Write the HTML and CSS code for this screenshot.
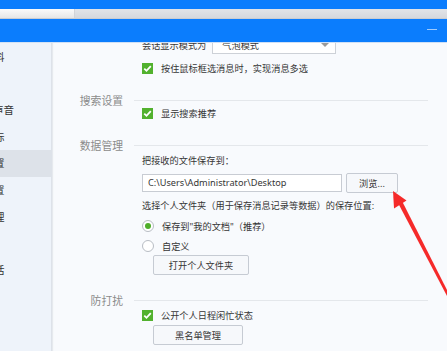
FILE: index.html
```html
<!DOCTYPE html>
<html lang="zh-CN">
<head>
  <meta charset="UTF-8">
  <title>系统设置</title>
  <link rel="stylesheet" href="styles.css">
</head>
<body>

  <!-- window chrome -->
  <div class="top-strip"></div>
  <div class="tab-strip">
    <div class="tab"></div>
    <div class="tab-rest"></div>
  </div>
  <div class="title-bar">
    <span class="min-btn"></span>
  </div>

  <div class="main">
    <!-- left menu, mostly scrolled out of view -->
    <div class="sidebar">
      <div class="side-item">资料</div>
      <div class="side-item"></div>
      <div class="side-item side-wide">声音</div>
      <div class="side-item">图标</div>
      <div class="side-item active">设置</div>
      <div class="side-item">设置</div>
      <div class="side-item">管理</div>
      <div class="side-item"></div>
      <div class="side-item">会话</div>
    </div>

    <div class="content">
      <!-- top rows, partly under the title bar -->
      <div class="section top-section">
        <div></div>
        <div class="section-body plain">
          <div class="row select-row">
            <span>会话显示模式为</span>
            <div class="select">
              <span>气泡模式</span>
              <span class="caret"></span>
            </div>
          </div>
          <div class="row check-row gap-7">
            <span class="checkbox"><svg viewBox="0 0 11 11"><path d="M2.3 5.6 L4.5 7.8 L8.8 3.2" fill="none" stroke="#fff" stroke-width="1.8"/></svg></span>
            <span>按住鼠标框选消息时，实现消息多选</span>
          </div>
        </div>
      </div>

      <div class="section">
        <div class="section-title">搜索设置</div>
        <div class="section-body">
          <div class="row check-row gap-5">
            <span class="checkbox"><svg viewBox="0 0 11 11"><path d="M2.3 5.6 L4.5 7.8 L8.8 3.2" fill="none" stroke="#fff" stroke-width="1.8"/></svg></span>
            <span>显示搜索推荐</span>
          </div>
        </div>
      </div>

      <div class="section">
        <div class="section-title">数据管理</div>
        <div class="section-body">
          <div class="row gap-7">把接收的文件保存到：</div>
          <div class="row path-row">
            <div class="path-input">C:\Users\Administrator\Desktop</div>
            <button class="btn browse-btn">浏览...</button>
          </div>
          <div class="row gap-5">选择个人文件夹（用于保存消息记录等数据）的保存位置:</div>
          <div class="row check-row gap-7">
            <span class="radio checked"></span>
            <span>保存到"我的文档"（推荐）</span>
          </div>
          <div class="row check-row gap-6">
            <span class="radio"></span>
            <span>自定义</span>
          </div>
          <button class="btn indent-btn open-btn">打开个人文件夹</button>
        </div>
      </div>

      <div class="section last">
        <div class="section-title">防打扰</div>
        <div class="section-body">
          <div class="row check-row gap-7">
            <span class="checkbox"><svg viewBox="0 0 11 11"><path d="M2.3 5.6 L4.5 7.8 L8.8 3.2" fill="none" stroke="#fff" stroke-width="1.8"/></svg></span>
            <span>公开个人日程闲忙状态</span>
          </div>
          <button class="btn indent-btn black-btn">黑名单管理</button>
        </div>
      </div>
    </div>
  </div>

  <!-- red annotation arrow drawn over the page -->
  <svg class="arrow" width="447" height="351" viewBox="0 0 447 351">
    <polygon points="393,191 406.5,200.5 394,208.5" fill="#f52a2a"/>
    <polygon points="397.5,202 401.5,200 448,292 447,296" fill="#f52a2a"/>
  </svg>

</body>
</html>
```

FILE: styles.css
```css
/* whole window */
body {
  margin: 0;
  width: 447px;
  height: 351px;
  overflow: hidden;
  font-family: "Noto Sans", "Noto Sans CJK SC", sans-serif;
  font-size: 9.2px;
  color: #363636;
  background: #f8fafd;
}

.top-strip {
  height: 9px;
  background: #0b7dfd;
}

.tab-strip {
  display: flex;
  height: 10px;
  border-bottom: 1px solid #c9ccd2;
  box-sizing: border-box;
}

.tab {
  width: 74px;
  background: linear-gradient(#fbfbfb, #e6e6e6);
  border-right: 1px solid #d2d4d8;
}

.tab-rest {
  flex: 1;
  background: linear-gradient(#e2e4e8, #d5d8dd);
}

.title-bar {
  height: 23px;
  background: #0b7dfd;
  display: flex;
  justify-content: flex-end;
  align-items: center;
  padding-right: 10px;
}

.min-btn {
  width: 10px;
  height: 1px;
  background: #9fcbfd;
  margin-top: -3px;
}

.main {
  display: flex;
  height: 309px;
  border-top: 1px solid #cfe0f6;
  box-sizing: border-box;
}

/* left menu */
.sidebar {
  width: 51px;
  flex-shrink: 0;
  background: #eef3fa;
  border-right: 1px solid #dde2e9;
  box-shadow: 1px 0 1px #e6e9ee;
  padding-top: 1px;
  overflow: hidden;
  font-size: 10.5px;
  color: #333;
}

.side-item {
  height: 26.6px;
  line-height: 26.6px;
  white-space: nowrap;
  text-indent: -16.5px;
}

.side-item.side-wide {
  text-indent: -7px;
}

.side-item.active {
  background: #dde2e9;
}

/* right panel */
.content {
  flex: 1;
  overflow: hidden;
}

.section {
  display: grid;
  grid-template-columns: 82px 1fr;
  margin-top: 25px;
}

.top-section {
  margin-top: -7px;
}

.section-title {
  font-size: 10.8px;
  line-height: 14px;
  color: #8b8b8b;
  text-align: right;
  padding-right: 11px;
  margin-top: -6px;
}

.section-body {
  border-top: 1px solid #e4e7eb;
  margin-right: 19px;
  padding-left: 8px;
}

.section-body.plain {
  border-top: none;
}

.row {
  display: flex;
  align-items: center;
  height: 14px;
  white-space: nowrap;
}

.gap-5 { margin-top: 5px; }
.gap-6 { margin-top: 6px; }
.gap-7 { margin-top: 7px; }

.check-row {
  gap: 8px;
}

.select-row {
  height: 18px;
  gap: 6px;
}

.select {
  width: 124px;
  height: 18px;
  box-sizing: border-box;
  border: 1px solid #cdd1d7;
  background: #fff;
  display: flex;
  align-items: center;
  justify-content: space-between;
  padding: 0 6px 0 9px;
}

.caret {
  width: 0;
  height: 0;
  border-left: 4px solid transparent;
  border-right: 4px solid transparent;
  border-top: 4px solid #9a9a9a;
}

.checkbox {
  width: 11px;
  height: 11px;
  background: #52b12e;
  flex-shrink: 0;
  display: flex;
}

.checkbox svg {
  width: 11px;
  height: 11px;
}

.radio {
  width: 12px;
  height: 12px;
  box-sizing: border-box;
  border: 1px solid #b8bdc4;
  border-radius: 50%;
  background: #fff;
  flex-shrink: 0;
  display: flex;
  align-items: center;
  justify-content: center;
}

.radio.checked::after {
  content: "";
  width: 6px;
  height: 6px;
  border-radius: 50%;
  background: #4fae2a;
}

.path-row {
  height: 20px;
  margin-top: 6px;
  gap: 4px;
}

.path-input {
  width: 200px;
  height: 18px;
  line-height: 16px;
  box-sizing: border-box;
  border: 1px solid #c8ccd3;
  background: #fff;
  padding-left: 5px;
  overflow: hidden;
}

.btn {
  font-family: inherit;
  font-size: 9.2px;
  color: #363636;
  height: 20px;
  padding: 0;
  box-sizing: border-box;
  border: 1px solid #c6cbd3;
  border-radius: 2px;
  background: #f6f8fb;
}

.browse-btn {
  width: 52px;
}

.indent-btn {
  display: block;
  margin-left: 11px;
}

.open-btn {
  width: 96px;
  margin-top: 2px;
}

.black-btn {
  width: 90px;
  margin-top: 3px;
}

/* annotation over everything */
.arrow {
  position: absolute;
  left: 0;
  top: 0;
  pointer-events: none;
}
```
